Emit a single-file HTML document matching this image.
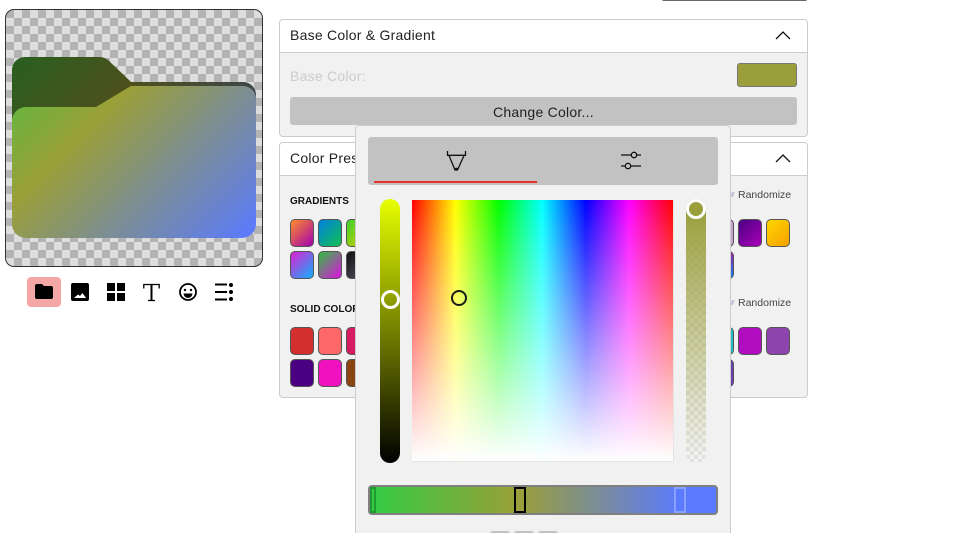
<!DOCTYPE html>
<html><head><meta charset="utf-8"><style>
html,body{margin:0;padding:0;background:#fff;width:970px;height:559px;overflow:hidden}
body{position:relative;font-family:"Liberation Sans",sans-serif;color:#222}
.a{position:absolute;box-sizing:border-box}
.t{position:absolute;white-space:nowrap}
.sw{position:absolute;box-sizing:border-box;width:24px;height:28px;border:1px solid #555;border-radius:5px}
.panel{position:absolute;box-sizing:border-box;left:279px;width:529px;border:1px solid #ccc;border-radius:4px;background:#f1f1f1;overflow:hidden}
.head{position:absolute;left:0;top:0;right:0;background:#fff;border-bottom:1px solid #ccc;height:32px}
.lab{font-size:10px;font-weight:bold;color:#111}
.rnd{font-size:10.5px;color:#444}
.title{font-size:14px;letter-spacing:.24px;color:#222}
.check{background-color:#ddd;background-image:conic-gradient(#ddd 25%,#b3b3b3 0 50%,#ddd 0 75%,#b3b3b3 0);background-size:16px 16px}
</style></head><body>

<div class="a" style="left:662px;top:-2px;width:145px;height:3px;background:#666;border-radius:2px"></div>

<div class="a check" style="left:5px;top:9px;width:258px;height:258px;border:1px solid #333;border-radius:9px"></div>
<svg class="a" style="left:0;top:0" width="270" height="320" viewBox="0 0 270 320">
<defs><linearGradient id="g" gradientUnits="userSpaceOnUse" x1="5.500" y1="5.500" x2="245" y2="245">
<stop offset="0" stop-color="#33cc44"/><stop offset=".43" stop-color="#9a9f38"/><stop offset="1" stop-color="#5a7aff"/></linearGradient></defs>
<path id="b" d="M12 70a13 13 0 0 1 13-13H99q6 0 10 4L131 82H243a13 13 0 0 1 13 13V160H12Z" fill="url(#g)"/>
<path d="M12 70a13 13 0 0 1 13-13H99q6 0 10 4L131 82H243a13 13 0 0 1 13 13V160H12Z" fill="#000" fill-opacity=".5"/>
<path d="M12 121a14 14 0 0 1 14-14H96L131 86H243a13 13 0 0 1 13 13V224a14 14 0 0 1-14 14H26a14 14 0 0 1-14-14Z" fill="url(#g)"/>
<rect x="27" y="277" width="34" height="30" rx="4" fill="#f4a7a4"/>
<path d="M37 284h5l2 2h7a2 2 0 0 1 2 2v9a2 2 0 0 1-2 2H37a2 2 0 0 1-2-2V286a2 2 0 0 1 2-2Z" fill="#000"/>
<path fill-rule="evenodd" d="M73 283h14a2 2 0 0 1 2 2v14a2 2 0 0 1-2 2H73a2 2 0 0 1-2-2V285a2 2 0 0 1 2-2ZM74 298h12l-3.500-5-2.500 3-2-1.500Z" fill="#000"/>
<path d="M107 283h8v8h-8ZM117 283h8v8h-8ZM107 293h8v8h-8ZM117 293h8v8h-8Z" fill="#000"/>
<path d="M143.800 288.500v-4h15.400v4M148 300.500h7" fill="none" stroke="#000" stroke-width="1.300"/>
<path d="M151.500 284.500v16" fill="none" stroke="#000" stroke-width="2"/>
<circle cx="188" cy="292" r="8" fill="none" stroke="#000" stroke-width="1.800"/>
<circle cx="185" cy="290" r="1.200" fill="#000"/><circle cx="191" cy="290" r="1.200" fill="#000"/>
<path d="M183.500 293.500h9a4.500 4.500 0 0 1-9 0Z" fill="#000"/>
<path d="M215 284.500h12M215 292h12M215 299.500h12" stroke="#000" stroke-width="2" fill="none"/>
<circle cx="231" cy="285" r="2" fill="#000"/><circle cx="231" cy="292" r="2" fill="#000"/><circle cx="231" cy="299" r="2" fill="#000"/>
</svg>

<div class="panel" style="top:19px;height:118px">
<div class="head"></div>
</div>
<div class="t title" style="left:290px;top:27px">Base Color &amp; Gradient</div>
<svg class="a" style="left:775px;top:29px" width="16" height="12"><path d="M1 10L8 3l7 7" fill="none" stroke="#111" stroke-width="1.300"/></svg>
<div class="t title" style="left:290px;top:68px;color:#ccc">Base Color:</div>
<div class="a" style="left:737px;top:63px;width:60px;height:24px;background:#9a9f3c;border:1px solid #777;border-radius:3px"></div>
<div class="a" style="left:290px;top:97px;width:507px;height:28px;background:#c2c2c2;border-radius:3px"></div>
<div class="t title" style="left:493px;top:104px">Change Color...</div>

<div class="panel" style="top:142px;height:256px">
<div class="head"></div>
</div>
<div class="t title" style="left:290px;top:150px">Color Presets</div>
<svg class="a" style="left:775px;top:152px" width="16" height="12"><path d="M1 10L8 3l7 7" fill="none" stroke="#111" stroke-width="1.300"/></svg>

<div class="t lab" style="left:290px;top:196px">GRADIENTS</div>
<div class="t lab" style="left:290px;top:304px">SOLID COLORS</div>
<div class="t rnd" style="left:738px;top:189px">Randomize</div>
<div class="t rnd" style="left:738px;top:297px">Randomize</div>
<div class="a" style="left:731px;top:192px;width:3px;height:5px;background:#c9c4dc;transform:skewX(-20deg)"></div>
<div class="a" style="left:731px;top:300px;width:3px;height:5px;background:#c9c4dc;transform:skewX(-20deg)"></div>

<div class="sw" style="left:290px;top:219px;background:linear-gradient(135deg,#ff8c2a,#a000b0)"></div>
<div class="sw" style="left:318px;top:219px;background:linear-gradient(135deg,#0080e0,#10c050)"></div>
<div class="sw" style="left:346px;top:219px;background:linear-gradient(135deg,#40d030,#d0d000)"></div>
<div class="sw" style="left:290px;top:251px;background:linear-gradient(135deg,#e020d0,#10b0ff)"></div>
<div class="sw" style="left:318px;top:251px;background:linear-gradient(135deg,#30c040,#e010e0)"></div>
<div class="sw" style="left:346px;top:251px;background:linear-gradient(135deg,#111,#556)"></div>
<div class="sw" style="left:710px;top:219px;background:#c9a0d0"></div>
<div class="sw" style="left:738px;top:219px;background:linear-gradient(135deg,#4b0082,#a800b8)"></div>
<div class="sw" style="left:766px;top:219px;background:linear-gradient(135deg,#ffd700,#f5a000)"></div>
<div class="sw" style="left:710px;top:251px;background:linear-gradient(180deg,#a020a8,#1080f0)"></div>

<div class="sw" style="left:290px;top:327px;background:#d32f2f"></div>
<div class="sw" style="left:318px;top:327px;background:#ff6868"></div>
<div class="sw" style="left:346px;top:327px;background:#d81b60"></div>
<div class="sw" style="left:290px;top:359px;background:#4b0082"></div>
<div class="sw" style="left:318px;top:359px;background:#f012be"></div>
<div class="sw" style="left:346px;top:359px;background:#8b4513"></div>
<div class="sw" style="left:710px;top:327px;background:#20c0c0"></div>
<div class="sw" style="left:738px;top:327px;background:#b10cc0"></div>
<div class="sw" style="left:766px;top:327px;background:#8e44ad"></div>
<div class="sw" style="left:710px;top:359px;background:#6a3fb0"></div>

<div class="a" style="left:355px;top:125px;width:376px;height:420px;background:#f1f1f1;border:1px solid #ccc;border-radius:4px"></div>
<div class="a" style="left:368px;top:137px;width:350px;height:48px;background:#c2c2c2;border-radius:3px"></div>
<div class="a" style="left:374px;top:181px;width:163px;height:2px;background:#e8302c"></div>
<svg class="a" style="left:440px;top:145px" width="32" height="32"><path d="M7.500 6v4.300h18V6M9 10.500l6 14.500h2.500L24 10.500" fill="none" stroke="#111" stroke-width="1.300"/><circle cx="16.300" cy="24" r="1.400" fill="#111"/></svg>
<svg class="a" style="left:615px;top:145px" width="32" height="32"><path d="M6 10h20M6 21h20" stroke="#111" stroke-width="1.300"/><circle cx="19" cy="10" r="2.700" fill="#c2c2c2" stroke="#111" stroke-width="1.300"/><circle cx="13" cy="21" r="2.700" fill="#c2c2c2" stroke="#111" stroke-width="1.300"/></svg>

<div class="a" style="left:380px;top:199px;width:20px;height:264px;border-radius:10px;background:linear-gradient(#e6ff00,#000)"></div>
<div class="a" style="left:380.500px;top:289.500px;width:19px;height:19px;border-radius:50%;border:3px solid #fff"></div>

<div class="a" style="left:412px;top:200px;width:262px;height:262px;background:linear-gradient(to bottom,rgba(255,255,255,0),#fff),linear-gradient(to right,#f00,#ff0 16.700%,#0f0 33.300%,#0ff 50%,#00f 66.700%,#f0f 83.300%,#f00);border-right:1px solid #e4e4e4;border-bottom:1px solid #e4e4e4"></div>
<div class="a" style="left:451px;top:290px;width:16px;height:16px;border-radius:50%;border:2px solid #1a1a1a"></div>

<div class="a" style="left:686px;top:199px;width:20px;height:264px;border-radius:10px;background-color:#f5f5f5;background-image:conic-gradient(#f5f5f5 25%,#e2e2e2 0 50%,#f5f5f5 0 75%,#e2e2e2 0);background-size:8px 8px"></div>
<div class="a" style="left:686px;top:199px;width:20px;height:264px;border-radius:10px;background:linear-gradient(#9a9f3c,#9a9f3c 3%,rgba(154,159,60,0))"></div>
<div class="a" style="left:686px;top:199px;width:20px;height:20px;border-radius:50%;border:3px solid #fff;background:#9a9f3c"></div>

<div class="a" style="left:368px;top:485px;width:350px;height:30px;border:2px solid #808080;border-radius:4px;background:linear-gradient(to right,#33cc44,#9a9f38 43%,#5a7aff 90%)"></div>
<div class="a" style="left:370px;top:487px;width:6px;height:26px;border:2px solid #1e9a2e;background:#33cc44"></div>
<div class="a" style="left:514px;top:487px;width:12px;height:26px;border:2px solid #000;background:#9a9f3c"></div>
<div class="a" style="left:674px;top:487px;width:12px;height:26px;border:2px solid #8aa0ff;background:#5a7aff"></div>

<div class="a" style="left:490px;top:531px;width:20px;height:6px;background:#c2c2c2;border-radius:3px"></div>
<div class="a" style="left:514px;top:531px;width:20px;height:6px;background:#c2c2c2;border-radius:3px"></div>
<div class="a" style="left:538px;top:531px;width:20px;height:6px;background:#c2c2c2;border-radius:3px"></div>

<div class="a" style="left:0;top:533px;width:970px;height:26px;background:#fff"></div>
</body></html>
